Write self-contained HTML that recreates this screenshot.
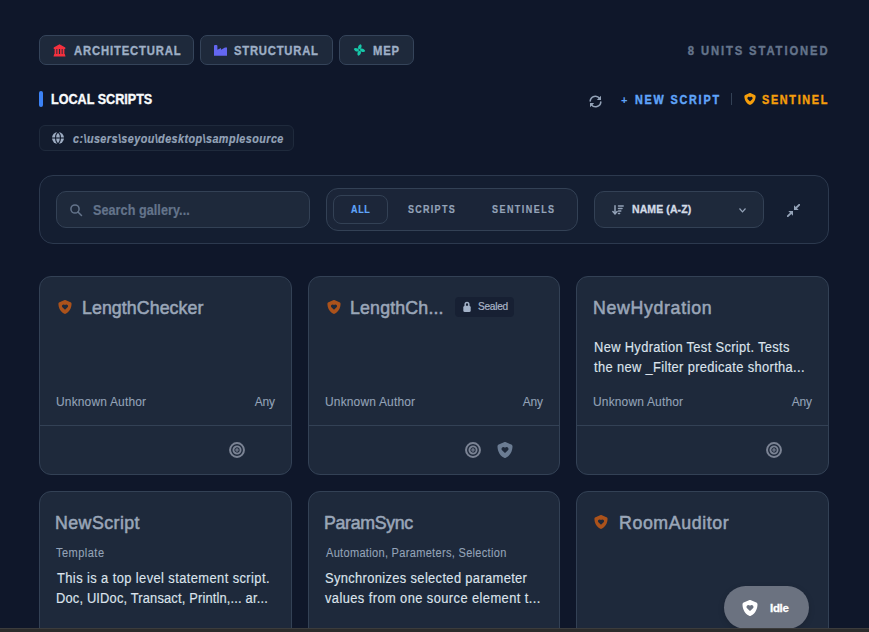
<!DOCTYPE html>
<html><head><meta charset="utf-8"><title>Gallery</title>
<style>
html,body{margin:0;padding:0;}
body{width:869px;height:632px;overflow:hidden;background:#0f172a;position:relative;font-family:"Liberation Sans",sans-serif;}
.t{position:absolute;line-height:1;white-space:nowrap;}
.b{position:absolute;}
</style></head><body>
<div class="b" style="left:39px;top:35px;width:155px;height:30px;background:#1e293b;border:1px solid #35445a;border-radius:7px;box-sizing:border-box;"></div>
<div class="b" style="left:200px;top:35px;width:133px;height:30px;background:#1e293b;border:1px solid #35445a;border-radius:7px;box-sizing:border-box;"></div>
<div class="b" style="left:339px;top:35px;width:75px;height:30px;background:#1e293b;border:1px solid #35445a;border-radius:7px;box-sizing:border-box;"></div>
<svg class="b" style="left:53px;top:43.5px;" width="13" height="13" viewBox="0 0 13 13"><path fill="#f5303e" d="M6.5 0.3 L12.3 3.6 V5 H0.7 V3.6 Z M1.6 5 H3.4 V10 H1.6 Z M4.3 5 H5.9 V10 H4.3 Z M7.1 5 H8.7 V10 H7.1 Z M9.6 5 H11.4 V10 H9.6 Z M1.2 10 H11.8 L12.5 12.4 H0.5 Z"/></svg>
<svg class="b" style="left:214px;top:44.5px;" width="13" height="11" viewBox="0 0 13 11"><path fill="#6366f1" d="M0 1 Q0 0 1 0 H2.4 Q3.4 0 3.4 1 V4.8 L7 3 V4.8 L11 2.6 H13 V10.8 H0 Z"/></svg>
<svg class="b" style="left:353px;top:44px;" width="13" height="12" viewBox="0 0 13 12"><g fill="#17c7a9"><path id="bl" d="M6.5 6 C4.2 5.2 4.6 1.2 7.6 0.3 C9.4 1.2 8.6 4.4 6.5 6Z"/><use href="#bl" transform="rotate(90 6.5 6)"/><use href="#bl" transform="rotate(180 6.5 6)"/><use href="#bl" transform="rotate(270 6.5 6)"/></g><circle cx="6.5" cy="6" r="0.8" fill="#1e293b"/></svg>
<div class="t" style="left:74px;top:45.42px;font-size:12.5px;color:#9eafc6;font-weight:700;letter-spacing:0.95px;-webkit-text-stroke:0.35px #9eafc6;transform:scaleX(0.9);transform-origin:0 0;">ARCHITECTURAL</div>
<div class="t" style="left:234px;top:45.42px;font-size:12.5px;color:#9eafc6;font-weight:700;letter-spacing:0.87px;-webkit-text-stroke:0.35px #9eafc6;transform:scaleX(0.9);transform-origin:0 0;">STRUCTURAL</div>
<div class="t" style="left:373px;top:45.42px;font-size:12.5px;color:#9eafc6;font-weight:700;letter-spacing:0.9px;-webkit-text-stroke:0.35px #9eafc6;transform:scaleX(0.9);transform-origin:0 0;">MEP</div>
<div class="t" style="right:42px;text-align:right;top:45.42px;font-size:12.5px;color:#64748b;font-weight:700;letter-spacing:2.1px;margin-right:-2.1px;-webkit-text-stroke:0.4px #64748b;transform:scaleX(0.9);transform-origin:100% 0;">8 UNITS STATIONED</div>
<div class="b" style="left:39px;top:91px;width:4px;height:16px;background:#3b82f6;border-radius:2px;box-sizing:border-box;"></div>
<div class="t" style="left:51px;top:92.45px;font-size:14px;color:#f8fafc;font-weight:700;letter-spacing:0px;-webkit-text-stroke:0.35px #f8fafc;transform:scaleX(0.9);transform-origin:0 0;">LOCAL SCRIPTS</div>
<svg class="b" style="left:589px;top:95px;" width="13" height="13" viewBox="0 0 13 13"><g fill="none" stroke="#94a3b8" stroke-width="1.6" stroke-linecap="round"><path d="M1.2 6 A5.2 5.2 0 0 1 10.6 3.4"/><path d="M11.8 7 A5.2 5.2 0 0 1 2.4 9.6"/></g><path fill="#94a3b8" d="M12 0.8 V5 H7.8 Z M1 12.2 V8 H5.2 Z"/></svg>
<div class="t" style="left:621px;top:94.69px;font-size:11px;color:#60a5fa;font-weight:700;letter-spacing:0px;">+</div>
<div class="t" style="left:635px;top:93.64px;font-size:12px;color:#60a5fa;font-weight:700;letter-spacing:2.0px;-webkit-text-stroke:0.4px #60a5fa;transform:scaleX(0.9);transform-origin:0 0;">NEW SCRIPT</div>
<div class="b" style="left:731px;top:93px;width:1px;height:12px;background:#334155;border-radius:0px;box-sizing:border-box;"></div>
<svg class="b" style="left:744px;top:93px;" width="12" height="12" viewBox="0 0 512 512"><path fill="#f59e0b" fill-rule="evenodd" d="M269.4 2.9C265.2 1 260.7 0 256 0s-9.2 1-13.4 2.9L54.3 82.8c-22 9.3-38.4 31-38.3 57.2c.5 99.2 41.3 280.7 213.6 363.2c16.7 8 36.1 8 52.8 0C454.7 420.7 495.5 239.2 496 140c.1-26.2-16.3-47.9-38.3-57.2L269.4 2.9zM144 221.3c0-33.8 27.4-61.3 61.3-61.3c16.2 0 31.8 6.5 43.3 17.9l7.4 7.4 7.4-7.4c11.5-11.5 27.1-17.9 43.3-17.9c33.8 0 61.3 27.4 61.3 61.3c0 16.2-6.5 31.8-17.9 43.3l-82.7 82.7c-6.2 6.2-16.4 6.2-22.6 0l-82.7-82.7c-11.5-11.5-17.9-27.1-17.9-43.3z"/></svg>
<div class="t" style="left:762px;top:93.64px;font-size:12px;color:#f59e0b;font-weight:700;letter-spacing:1.9px;-webkit-text-stroke:0.4px #f59e0b;transform:scaleX(0.9);transform-origin:0 0;">SENTINEL</div>
<div class="b" style="left:39px;top:125px;width:255px;height:26px;background:#131c2e;border:1px solid #1f2a3c;border-radius:6px;box-sizing:border-box;"></div>
<svg class="b" style="left:51.7px;top:131.8px;" width="12" height="12" viewBox="0 0 12 12"><circle cx="6" cy="6" r="6" fill="#9eadc3"/><g fill="none" stroke="#131c2e" stroke-width="1.1"><path d="M6 -0.2 C2.7 2.8 2.7 9.2 6 12.2"/><path d="M6 -0.2 C9.3 2.8 9.3 9.2 6 12.2"/><path d="M0 6 H12"/></g></svg>
<div class="t" style="left:73px;top:132.84px;font-size:12px;color:#94a3b8;font-weight:700;letter-spacing:0.48px;font-style:italic;-webkit-text-stroke:0.2px #94a3b8;transform:scaleX(0.9);transform-origin:0 0;">c:\users\seyou\desktop\samplesource</div>
<div class="b" style="left:39px;top:175px;width:790px;height:69px;background:#141e31;border:1px solid #2c394e;border-radius:14px;box-sizing:border-box;"></div>
<div class="b" style="left:56px;top:191px;width:254px;height:37px;background:#1e293b;border:1px solid #334155;border-radius:10px;box-sizing:border-box;"></div>
<svg class="b" style="left:69.5px;top:203.8px;" width="13" height="13" viewBox="0 0 13 13"><g fill="none" stroke="#64748b" stroke-width="1.5" stroke-linecap="round"><circle cx="5" cy="5" r="4.1"/><path d="M8 8 L11.5 11.5"/></g></svg>
<div class="t" style="left:93px;top:203.35px;font-size:14px;color:#64748b;font-weight:700;letter-spacing:0.07px;-webkit-text-stroke:0.2px #64748b;transform:scaleX(0.9);transform-origin:0 0;">Search gallery...</div>
<div class="b" style="left:326px;top:188px;width:252px;height:43px;background:#1b2538;border:1px solid #334155;border-radius:12px;box-sizing:border-box;"></div>
<div class="b" style="left:333px;top:195px;width:55px;height:29px;background:#1c2639;border:1px solid #334155;border-radius:8px;box-sizing:border-box;"></div>
<div class="t" style="left:351px;top:204.53px;font-size:10px;color:#60a5fa;font-weight:700;letter-spacing:0.71px;-webkit-text-stroke:0.2px #60a5fa;transform:scaleX(0.9);transform-origin:0 0;">ALL</div>
<div class="t" style="left:408px;top:204.53px;font-size:10px;color:#94a3b8;font-weight:700;letter-spacing:1.42px;-webkit-text-stroke:0.2px #94a3b8;transform:scaleX(0.9);transform-origin:0 0;">SCRIPTS</div>
<div class="t" style="left:492px;top:204.53px;font-size:10px;color:#94a3b8;font-weight:700;letter-spacing:1.61px;-webkit-text-stroke:0.2px #94a3b8;transform:scaleX(0.9);transform-origin:0 0;">SENTINELS</div>
<div class="b" style="left:594px;top:191px;width:170px;height:37px;background:#1e293b;border:1px solid #334155;border-radius:10px;box-sizing:border-box;"></div>
<svg class="b" style="left:612px;top:205px;" width="12" height="10" viewBox="0 0 12 10"><g fill="none" stroke="#94a3b8" stroke-width="1.5" stroke-linecap="round"><path d="M3 0.8 V8.5"/><path d="M0.9 6.6 L3 8.8 L5.1 6.6"/><path d="M6.5 1 H11.2 M6.5 3.5 H10 M6.5 6 H8.8 M6.5 8.5 H7.6"/></g></svg>
<div class="t" style="left:632px;top:203.91px;font-size:10.5px;color:#d3dbe6;font-weight:700;letter-spacing:0.1px;-webkit-text-stroke:0.3px #d3dbe6;">NAME (A-Z)</div>
<svg class="b" style="left:739px;top:208px;" width="7" height="5" viewBox="0 0 7 5"><path fill="none" stroke="#94a3b8" stroke-width="1.2" d="M0.5 0.5 L3.5 3.8 L6.5 0.5"/></svg>
<svg class="b" style="left:787px;top:203.5px;" width="13" height="13" viewBox="0 0 13 13"><g fill="#94a3b8"><path d="M7 1.3 V6 H11.7 Z"/><path d="M6 7 H1.3 L6 11.7 Z"/></g><g stroke="#94a3b8" stroke-width="1.9" stroke-linecap="round"><path d="M9.3 3.7 L12.2 0.8"/><path d="M3.7 9.3 L0.8 12.2"/></g></svg>
<div class="b" style="left:39px;top:276px;width:253px;height:199px;background:#1e293b;border:1px solid #334155;border-radius:12px;box-sizing:border-box;"></div>
<div class="b" style="left:40px;top:425px;width:251px;height:1px;background:#334155;border-radius:0px;box-sizing:border-box;"></div>
<div class="t" style="left:56px;top:394.80px;font-size:13px;color:#94a3b8;font-weight:400;letter-spacing:0.19px;-webkit-text-stroke:0.1px #94a3b8;transform:scaleX(0.92);transform-origin:0 0;">Unknown Author</div>
<div class="t" style="right:594px;text-align:right;top:394.80px;font-size:13px;color:#94a3b8;font-weight:400;letter-spacing:-0.2px;margin-right:0.2px;-webkit-text-stroke:0.1px #94a3b8;transform:scaleX(0.92);transform-origin:100% 0;">Any</div>
<div class="b" style="left:308px;top:276px;width:252px;height:199px;background:#1e293b;border:1px solid #334155;border-radius:12px;box-sizing:border-box;"></div>
<div class="b" style="left:309px;top:425px;width:250px;height:1px;background:#334155;border-radius:0px;box-sizing:border-box;"></div>
<div class="t" style="left:325px;top:394.80px;font-size:13px;color:#94a3b8;font-weight:400;letter-spacing:0.19px;-webkit-text-stroke:0.1px #94a3b8;transform:scaleX(0.92);transform-origin:0 0;">Unknown Author</div>
<div class="t" style="right:326px;text-align:right;top:394.80px;font-size:13px;color:#94a3b8;font-weight:400;letter-spacing:-0.2px;margin-right:0.2px;-webkit-text-stroke:0.1px #94a3b8;transform:scaleX(0.92);transform-origin:100% 0;">Any</div>
<div class="b" style="left:576px;top:276px;width:253px;height:199px;background:#1e293b;border:1px solid #334155;border-radius:12px;box-sizing:border-box;"></div>
<div class="b" style="left:577px;top:425px;width:251px;height:1px;background:#334155;border-radius:0px;box-sizing:border-box;"></div>
<div class="t" style="left:593px;top:394.80px;font-size:13px;color:#94a3b8;font-weight:400;letter-spacing:0.19px;-webkit-text-stroke:0.1px #94a3b8;transform:scaleX(0.92);transform-origin:0 0;">Unknown Author</div>
<div class="t" style="right:57px;text-align:right;top:394.80px;font-size:13px;color:#94a3b8;font-weight:400;letter-spacing:-0.2px;margin-right:0.2px;-webkit-text-stroke:0.1px #94a3b8;transform:scaleX(0.92);transform-origin:100% 0;">Any</div>
<svg class="b" style="left:58px;top:300px;" width="14" height="14" viewBox="0 0 512 512"><path fill="#ab521b" fill-rule="evenodd" d="M269.4 2.9C265.2 1 260.7 0 256 0s-9.2 1-13.4 2.9L54.3 82.8c-22 9.3-38.4 31-38.3 57.2c.5 99.2 41.3 280.7 213.6 363.2c16.7 8 36.1 8 52.8 0C454.7 420.7 495.5 239.2 496 140c.1-26.2-16.3-47.9-38.3-57.2L269.4 2.9zM144 221.3c0-33.8 27.4-61.3 61.3-61.3c16.2 0 31.8 6.5 43.3 17.9l7.4 7.4 7.4-7.4c11.5-11.5 27.1-17.9 43.3-17.9c33.8 0 61.3 27.4 61.3 61.3c0 16.2-6.5 31.8-17.9 43.3l-82.7 82.7c-6.2 6.2-16.4 6.2-22.6 0l-82.7-82.7c-11.5-11.5-17.9-27.1-17.9-43.3z"/></svg>
<div class="t" style="left:82px;top:299.04px;font-size:18.5px;color:#9aa6b8;font-weight:400;letter-spacing:0.08px;-webkit-text-stroke:0.55px #9aa6b8;transform:scaleX(0.96);transform-origin:0 0;">LengthChecker</div>
<svg class="b" style="left:228px;top:441px;" width="18" height="18" viewBox="0 0 18 18"><g fill="none" stroke="#7b8394"><circle cx="9" cy="9" r="6.95" stroke-width="2"/><circle cx="9" cy="9" r="3.6" stroke-width="1.9"/><circle cx="9" cy="9" r="1.1" stroke-width="1.1"/></g></svg>
<svg class="b" style="left:327px;top:300px;" width="14" height="14" viewBox="0 0 512 512"><path fill="#ab521b" fill-rule="evenodd" d="M269.4 2.9C265.2 1 260.7 0 256 0s-9.2 1-13.4 2.9L54.3 82.8c-22 9.3-38.4 31-38.3 57.2c.5 99.2 41.3 280.7 213.6 363.2c16.7 8 36.1 8 52.8 0C454.7 420.7 495.5 239.2 496 140c.1-26.2-16.3-47.9-38.3-57.2L269.4 2.9zM144 221.3c0-33.8 27.4-61.3 61.3-61.3c16.2 0 31.8 6.5 43.3 17.9l7.4 7.4 7.4-7.4c11.5-11.5 27.1-17.9 43.3-17.9c33.8 0 61.3 27.4 61.3 61.3c0 16.2-6.5 31.8-17.9 43.3l-82.7 82.7c-6.2 6.2-16.4 6.2-22.6 0l-82.7-82.7c-11.5-11.5-17.9-27.1-17.9-43.3z"/></svg>
<div class="t" style="left:350px;top:299.04px;font-size:18.5px;color:#9aa6b8;font-weight:400;letter-spacing:0.18px;-webkit-text-stroke:0.55px #9aa6b8;transform:scaleX(0.96);transform-origin:0 0;">LengthCh...</div>
<div class="b" style="left:455px;top:297px;width:59px;height:20px;background:#172033;border-radius:4px;box-sizing:border-box;"></div>
<svg class="b" style="left:463px;top:300.8px;" width="8" height="11" viewBox="0 0 8 11"><path fill="none" d="M2.2 5 V3.2 A1.8 1.8 0 0 1 5.8 3.2 V5" stroke="#a3b2c8" stroke-width="1.5"/><rect x="0.3" y="4.8" width="7.4" height="6.2" rx="1.6" fill="#a3b2c8"/></svg>
<div class="t" style="left:478px;top:300.99px;font-size:11px;color:#aab6c8;font-weight:400;letter-spacing:-0.3px;-webkit-text-stroke:0.2px #aab6c8;transform:scaleX(0.92);transform-origin:0 0;">Sealed</div>
<svg class="b" style="left:464px;top:441px;" width="18" height="18" viewBox="0 0 18 18"><g fill="none" stroke="#7b8394"><circle cx="9" cy="9" r="6.95" stroke-width="2"/><circle cx="9" cy="9" r="3.6" stroke-width="1.9"/><circle cx="9" cy="9" r="1.1" stroke-width="1.1"/></g></svg>
<svg class="b" style="left:497px;top:442px;" width="16" height="16" viewBox="0 0 512 512"><path fill="#6b7c93" fill-rule="evenodd" d="M269.4 2.9C265.2 1 260.7 0 256 0s-9.2 1-13.4 2.9L54.3 82.8c-22 9.3-38.4 31-38.3 57.2c.5 99.2 41.3 280.7 213.6 363.2c16.7 8 36.1 8 52.8 0C454.7 420.7 495.5 239.2 496 140c.1-26.2-16.3-47.9-38.3-57.2L269.4 2.9zM144 221.3c0-33.8 27.4-61.3 61.3-61.3c16.2 0 31.8 6.5 43.3 17.9l7.4 7.4 7.4-7.4c11.5-11.5 27.1-17.9 43.3-17.9c33.8 0 61.3 27.4 61.3 61.3c0 16.2-6.5 31.8-17.9 43.3l-82.7 82.7c-6.2 6.2-16.4 6.2-22.6 0l-82.7-82.7c-11.5-11.5-17.9-27.1-17.9-43.3z"/></svg>
<div class="t" style="left:593px;top:299.04px;font-size:18.5px;color:#9aa6b8;font-weight:400;letter-spacing:0.68px;-webkit-text-stroke:0.55px #9aa6b8;transform:scaleX(0.96);transform-origin:0 0;">NewHydration</div>
<div class="t" style="left:594px;top:340.45px;font-size:14px;color:#dce3ec;font-weight:400;letter-spacing:0.37px;-webkit-text-stroke:0.15px #dce3ec;transform:scaleX(0.92);transform-origin:0 0;">New Hydration Test Script. Tests</div>
<div class="t" style="left:594px;top:360.45px;font-size:14px;color:#dce3ec;font-weight:400;letter-spacing:0.38px;-webkit-text-stroke:0.15px #dce3ec;transform:scaleX(0.92);transform-origin:0 0;">the new _Filter predicate shortha...</div>
<svg class="b" style="left:764.5px;top:441px;" width="18" height="18" viewBox="0 0 18 18"><g fill="none" stroke="#7b8394"><circle cx="9" cy="9" r="6.95" stroke-width="2"/><circle cx="9" cy="9" r="3.6" stroke-width="1.9"/><circle cx="9" cy="9" r="1.1" stroke-width="1.1"/></g></svg>
<div class="b" style="left:39px;top:491px;width:253px;height:160px;background:#1e293b;border:1px solid #334155;border-radius:12px;box-sizing:border-box;"></div>
<div class="b" style="left:308px;top:491px;width:252px;height:160px;background:#1e293b;border:1px solid #334155;border-radius:12px;box-sizing:border-box;"></div>
<div class="b" style="left:576px;top:491px;width:253px;height:160px;background:#1e293b;border:1px solid #334155;border-radius:12px;box-sizing:border-box;"></div>
<div class="t" style="left:55px;top:514.04px;font-size:18.5px;color:#9aa6b8;font-weight:400;letter-spacing:0.47px;-webkit-text-stroke:0.55px #9aa6b8;transform:scaleX(0.96);transform-origin:0 0;">NewScript</div>
<div class="t" style="left:56px;top:547.34px;font-size:12px;color:#94a3b8;font-weight:400;letter-spacing:0.5px;-webkit-text-stroke:0.1px #94a3b8;transform:scaleX(0.92);transform-origin:0 0;">Template</div>
<div class="t" style="left:56.5px;top:571.45px;font-size:14px;color:#dce3ec;font-weight:400;letter-spacing:0.45px;-webkit-text-stroke:0.15px #dce3ec;transform:scaleX(0.92);transform-origin:0 0;">This is a top level statement script.</div>
<div class="t" style="left:56px;top:591.45px;font-size:14px;color:#dce3ec;font-weight:400;letter-spacing:0.18px;-webkit-text-stroke:0.15px #dce3ec;transform:scaleX(0.92);transform-origin:0 0;">Doc, UIDoc, Transact, Println,... ar...</div>
<div class="t" style="left:324px;top:514.04px;font-size:18.5px;color:#9aa6b8;font-weight:400;letter-spacing:-0.34px;-webkit-text-stroke:0.55px #9aa6b8;transform:scaleX(0.96);transform-origin:0 0;">ParamSync</div>
<div class="t" style="left:325.5px;top:547.34px;font-size:12px;color:#94a3b8;font-weight:400;letter-spacing:0.33px;-webkit-text-stroke:0.1px #94a3b8;transform:scaleX(0.92);transform-origin:0 0;">Automation, Parameters, Selection</div>
<div class="t" style="left:325px;top:571.45px;font-size:14px;color:#dce3ec;font-weight:400;letter-spacing:0.39px;-webkit-text-stroke:0.15px #dce3ec;transform:scaleX(0.92);transform-origin:0 0;">Synchronizes selected parameter</div>
<div class="t" style="left:325px;top:591.45px;font-size:14px;color:#dce3ec;font-weight:400;letter-spacing:0.45px;-webkit-text-stroke:0.15px #dce3ec;transform:scaleX(0.92);transform-origin:0 0;">values from one source element t...</div>
<svg class="b" style="left:594px;top:515px;" width="14" height="14" viewBox="0 0 512 512"><path fill="#ab521b" fill-rule="evenodd" d="M269.4 2.9C265.2 1 260.7 0 256 0s-9.2 1-13.4 2.9L54.3 82.8c-22 9.3-38.4 31-38.3 57.2c.5 99.2 41.3 280.7 213.6 363.2c16.7 8 36.1 8 52.8 0C454.7 420.7 495.5 239.2 496 140c.1-26.2-16.3-47.9-38.3-57.2L269.4 2.9zM144 221.3c0-33.8 27.4-61.3 61.3-61.3c16.2 0 31.8 6.5 43.3 17.9l7.4 7.4 7.4-7.4c11.5-11.5 27.1-17.9 43.3-17.9c33.8 0 61.3 27.4 61.3 61.3c0 16.2-6.5 31.8-17.9 43.3l-82.7 82.7c-6.2 6.2-16.4 6.2-22.6 0l-82.7-82.7c-11.5-11.5-17.9-27.1-17.9-43.3z"/></svg>
<div class="t" style="left:619px;top:514.04px;font-size:18.5px;color:#9aa6b8;font-weight:400;letter-spacing:0.62px;-webkit-text-stroke:0.55px #9aa6b8;transform:scaleX(0.96);transform-origin:0 0;">RoomAuditor</div>
<div class="b" style="left:724px;top:586px;width:85px;height:43px;background:#6b7280;border-radius:22px;box-sizing:border-box;box-shadow:0 2px 6px rgba(0,0,0,0.15);"></div>
<svg class="b" style="left:742px;top:600px;" width="16" height="16" viewBox="0 0 512 512"><path fill="#ffffff" fill-rule="evenodd" d="M269.4 2.9C265.2 1 260.7 0 256 0s-9.2 1-13.4 2.9L54.3 82.8c-22 9.3-38.4 31-38.3 57.2c.5 99.2 41.3 280.7 213.6 363.2c16.7 8 36.1 8 52.8 0C454.7 420.7 495.5 239.2 496 140c.1-26.2-16.3-47.9-38.3-57.2L269.4 2.9zM144 221.3c0-33.8 27.4-61.3 61.3-61.3c16.2 0 31.8 6.5 43.3 17.9l7.4 7.4 7.4-7.4c11.5-11.5 27.1-17.9 43.3-17.9c33.8 0 61.3 27.4 61.3 61.3c0 16.2-6.5 31.8-17.9 43.3l-82.7 82.7c-6.2 6.2-16.4 6.2-22.6 0l-82.7-82.7c-11.5-11.5-17.9-27.1-17.9-43.3z"/></svg>
<div class="t" style="left:770px;top:602.87px;font-size:11.5px;color:#ffffff;font-weight:700;letter-spacing:-0.3px;-webkit-text-stroke:0.3px #ffffff;">Idle</div>
<div class="b" style="left:0px;top:628px;width:869px;height:4px;background:#2b2b2b;border-radius:0px;box-sizing:border-box;border-top:1px solid #3c3c3c;"></div>

</body></html>
